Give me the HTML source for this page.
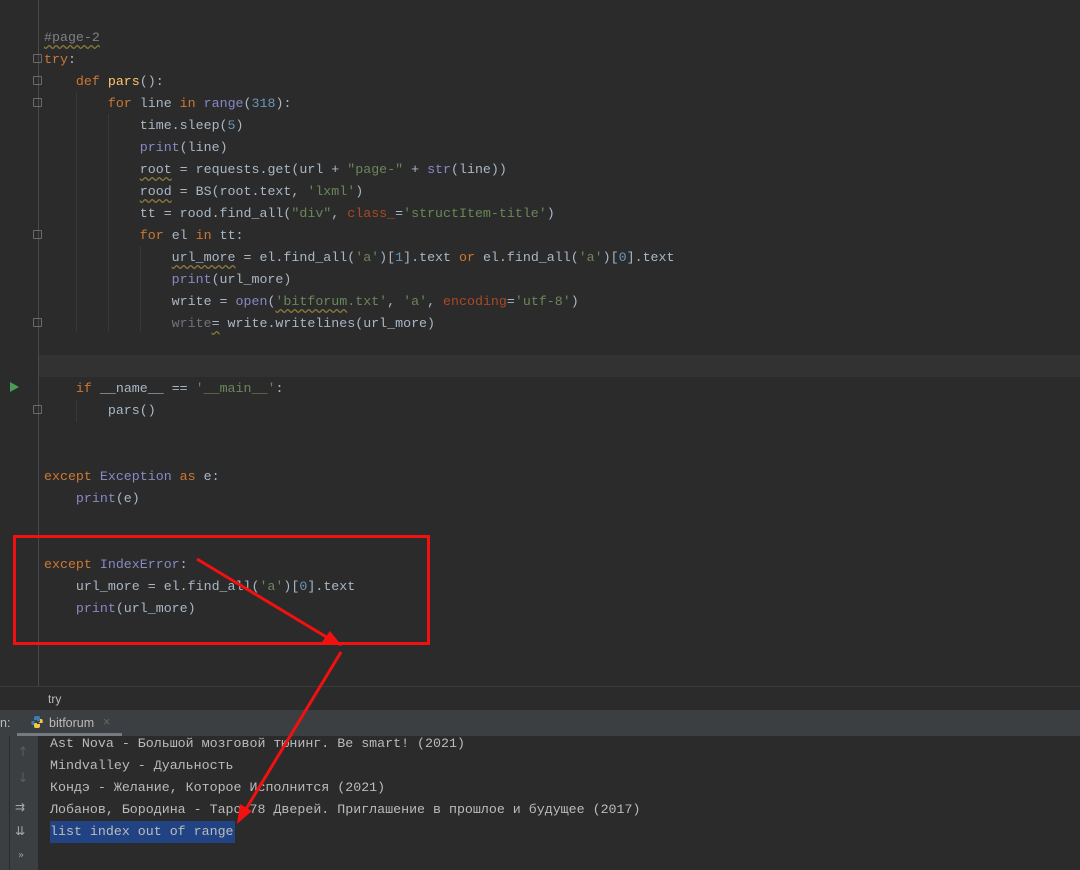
<!DOCTYPE html>
<html><head><meta charset="utf-8"><style>
*{margin:0;padding:0;box-sizing:border-box}
body{width:1080px;height:870px;background:#2b2b2b;position:relative;overflow:hidden;font-family:"Liberation Mono",monospace;font-size:13.3px;color:#a9b7c6}
.l{position:absolute;left:44px;height:22px;line-height:22px;white-space:pre;margin-top:1px}
.k{color:#cc7832}.f{color:#ffc66d}.b{color:#8888c6}.n{color:#6897bb}.s{color:#6a8759}.c{color:#808080}.p{color:#aa4926}.g{color:#72737a}
.w{text-decoration:underline wavy #8a7a3a;text-underline-offset:3px}
.gl{position:absolute;left:38px;top:0;width:1px;height:686px;background:#4a4a4a}
.ig{position:absolute;width:1px;background:#383838}
.fold{position:absolute;left:33px;width:9px;height:9px;border:1px solid #6a6a6a;border-radius:1px}
.cl{position:absolute;left:50px;height:22px;line-height:22px;white-space:pre;color:#bbbbbb}
</style></head><body>
<div class="gl"></div>
<div class="ig" style="left:76px;top:92px;height:240px"></div>
<div class="ig" style="left:108px;top:114px;height:218px"></div>
<div class="ig" style="left:140px;top:246px;height:86px"></div>
<div class="ig" style="left:76px;top:400px;height:22px"></div>
<div style="position:absolute;left:39px;top:355px;width:1041px;height:22px;background:#323232"></div>
<div class="fold" style="top:54px"></div><div class="fold" style="top:76px"></div><div class="fold" style="top:98px"></div><div class="fold" style="top:230px"></div><div class="fold" style="top:318px"></div><div class="fold" style="top:405px"></div>
<div style="position:absolute;left:10px;top:382px;width:0;height:0;border-left:9px solid #499c54;border-top:5px solid transparent;border-bottom:5px solid transparent"></div>

<div class="l c w" style="top:26px">#page-2</div>
<div class="l" style="top:48px"><span class="k">try</span>:</div>
<div class="l" style="top:70px">    <span class="k">def </span><span class="f">pars</span>():</div>
<div class="l" style="top:92px">        <span class="k">for </span>line <span class="k">in </span><span class="b">range</span>(<span class="n">318</span>):</div>
<div class="l" style="top:114px">            time.sleep(<span class="n">5</span>)</div>
<div class="l" style="top:136px">            <span class="b">print</span>(line)</div>
<div class="l" style="top:158px">            <span class="w">root</span> = requests.get(url + <span class="s">"page-"</span> + <span class="b">str</span>(line))</div>
<div class="l" style="top:180px">            <span class="w">rood</span> = BS(root.text, <span class="s">'lxml'</span>)</div>
<div class="l" style="top:202px">            tt = rood.find_all(<span class="s">"div"</span>, <span class="p">class_</span>=<span class="s">'structItem-title'</span>)</div>
<div class="l" style="top:224px">            <span class="k">for </span>el <span class="k">in </span>tt:</div>
<div class="l" style="top:246px">                <span class="w">url_more</span> = el.find_all(<span class="s">'a'</span>)[<span class="n">1</span>].text <span class="k">or </span>el.find_all(<span class="s">'a'</span>)[<span class="n">0</span>].text</div>
<div class="l" style="top:268px">                <span class="b">print</span>(url_more)</div>
<div class="l" style="top:290px">                write = <span class="b">open</span>(<span class="s"><span class="w">'bitforum</span>.txt'</span>, <span class="s">'a'</span>, <span class="p">encoding</span>=<span class="s">'utf-8'</span>)</div>
<div class="l" style="top:312px">                <span class="g">write</span><span class="w">=</span> write.writelines(url_more)</div>
<div class="l" style="top:377px">    <span class="k">if </span>__name__ == <span class="s">'__main__'</span>:</div>
<div class="l" style="top:399px">        pars()</div>
<div class="l" style="top:465px"><span class="k">except </span><span class="b">Exception</span> <span class="k">as </span>e:</div>
<div class="l" style="top:487px">    <span class="b">print</span>(e)</div>
<div class="l" style="top:553px"><span class="k">except </span><span class="b">IndexError</span>:</div>
<div class="l" style="top:575px">    url_more = el.find_all(<span class="s">'a'</span>)[<span class="n">0</span>].text</div>
<div class="l" style="top:597px">    <span class="b">print</span>(url_more)</div>

<div style="position:absolute;left:0;top:686px;width:1080px;height:24px;background:#2b2b2b;border-top:1px solid #3a3a3a;font-family:'Liberation Sans',sans-serif;font-size:12px;color:#bbb;padding:5px 0 0 48px">try</div>
<div style="position:absolute;left:0;top:710px;width:1080px;height:26px;background:#3c3f41;font-family:'Liberation Sans',sans-serif;font-size:12.5px;color:#bbb">
<span style="position:absolute;left:0;top:6px">n:</span>
<svg style="position:absolute;left:30px;top:5px" width="14" height="14" viewBox="0 0 14 14"><path d="M7 1C4 1 4 2 4 3v2h3v1H2C1 6 1 8 2 10h2V8c0-1 1-2 2-2h3c1 0 1-1 1-2V3C10 1 9 1 7 1z" fill="#3d7ab8"/><path d="M7 13c3 0 3-1 3-2V9H7V8h5c1 0 1-2 0-4h-2v2c0 1-1 2-2 2H5c-1 0-1 1-1 2v1c0 2 1 2 3 2z" fill="#f3c93d"/></svg>
<span style="position:absolute;left:49px;top:6px">bitforum</span>
<span style="position:absolute;left:103px;top:5px;color:#666">×</span>
<div style="position:absolute;left:17px;top:23px;width:105px;height:3px;background:#747a80"></div>
</div>
<div style="position:absolute;left:0;top:736px;width:38px;height:134px;background:#3c3f41"></div>
<div style="position:absolute;left:9px;top:736px;width:1px;height:134px;background:#2b2b2b"></div>
<div style="position:absolute;left:14px;top:740px;font-family:'DejaVu Sans',sans-serif;font-size:13px;color:#5a5d60;line-height:26px;text-align:center;width:18px">↑<br>↓</div>
<div style="position:absolute;left:15px;top:795px;font-family:'DejaVu Sans',sans-serif;font-size:12px;color:#aaa;line-height:24px;width:18px">⇉<br>⇊</div>
<div style="position:absolute;left:18px;top:850px;font-family:'DejaVu Sans',sans-serif;font-size:10px;color:#999">»</div>

<div class="cl" style="top:733px">Ast Nova - Большой мозговой тюнинг. Be smart! (2021)</div>
<div class="cl" style="top:755px">Mindvalley - Дуальность</div>
<div class="cl" style="top:777px">Кондэ - Желание, Которое Исполнится (2021)</div>
<div class="cl" style="top:799px">Лобанов, Бородина - Таро 78 Дверей. Приглашение в прошлое и будущее (2017)</div>
<div class="cl" style="top:821px;background:#214283;padding-right:1px">list index out of range</div>

<svg style="position:absolute;left:0;top:0" width="1080" height="870">
<rect x="14.5" y="536.5" width="414" height="107" fill="none" stroke="#f21010" stroke-width="3"/>
<line x1="197" y1="559" x2="333" y2="641" stroke="#f21010" stroke-width="3"/>
<polygon points="342,646 322,642 330,631" fill="#f21010"/>
<line x1="341" y1="652" x2="243" y2="814" stroke="#f21010" stroke-width="3"/>
<polygon points="237,824 240,804 252,811" fill="#f21010"/>
</svg>
</body></html>
